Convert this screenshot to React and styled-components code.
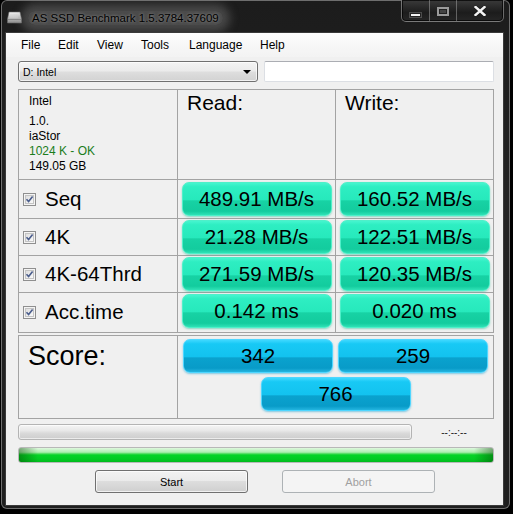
import React from "react";
import styled, { createGlobalStyle, css } from "styled-components";

const GlobalStyle = createGlobalStyle`
  html, body {
    margin: 0;
    padding: 0;
    background: #000;
  }
  body {
    width: 513px;
    height: 514px;
    overflow: hidden;
    font-family: "Liberation Sans", Arial, sans-serif;
  }
  * {
    box-sizing: border-box;
  }
`;

const menuItems = ["File", "Edit", "View", "Tools", "Language", "Help"];

const results = [
  { name: "Seq", read: "489.91 MB/s", write: "160.52 MB/s", first: true },
  { name: "4K", read: "21.28 MB/s", write: "122.51 MB/s" },
  { name: "4K-64Thrd", read: "271.59 MB/s", write: "120.35 MB/s" },
  { name: "Acc.time", read: "0.142 ms", write: "0.020 ms" }
];

const DriveIcon = () => (
  <svg width="15" height="13" viewBox="0 0 15 13">
    <defs>
      <linearGradient id="drv" x1="0" y1="0" x2="0" y2="1">
        <stop offset="0" stopColor="#f4f4f4" />
        <stop offset="0.6" stopColor="#b9b9b9" />
        <stop offset="1" stopColor="#8a8a8a" />
      </linearGradient>
    </defs>
    <path d="M2 1 H13 L14.5 8 V12 H0.5 V8 Z" fill="url(#drv)" stroke="#6a6a6a" strokeWidth="0.6" />
    <path d="M1 8.5 H14" stroke="#777" strokeWidth="0.7" />
    <path d="M4 3 V7 M6 3 V7 M8 3 V7 M10 3 V7" stroke="#d8d8d8" strokeWidth="0.7" />
  </svg>
);

const CloseIcon = () => (
  <svg width="12" height="10" viewBox="0 0 12 10">
    <path d="M1.5 1 L10.5 9 M10.5 1 L1.5 9" stroke="#1a1a1a" strokeWidth="4" strokeLinecap="square" />
    <path d="M1.5 1 L10.5 9 M10.5 1 L1.5 9" stroke="#f4f4f4" strokeWidth="2.4" strokeLinecap="square" />
  </svg>
);

const CheckBox = () => (
  <svg width="13" height="13" viewBox="0 0 13 13">
    <defs>
      <linearGradient id="cbx" x1="0" y1="0" x2="1" y2="1">
        <stop offset="0" stopColor="#dcdcdc" />
        <stop offset="1" stopColor="#fbfbfb" />
      </linearGradient>
    </defs>
    <rect x="0.5" y="0.5" width="12" height="12" fill="#f4f4f4" stroke="#8f8f8f" />
    <rect x="2.5" y="2.5" width="8" height="8" fill="url(#cbx)" stroke="#c4c4c4" />
    <path d="M3.5 6.3 L5.6 8.6 L9.6 3.6" fill="none" stroke="#4a5d8c" strokeWidth="1.6" />
  </svg>
);

const App = () => {
  return (
    <>
      <GlobalStyle />
      <Desktop>
        <Window>
          <TitleBar>
            <TitleIcon>
              <DriveIcon />
            </TitleIcon>
            <TitleText>AS SSD Benchmark 1.5.3784.37609</TitleText>
            <Controls>
              <CtrlButton $w={28}>
                <MinGlyph />
              </CtrlButton>
              <CtrlButton $w={27}>
                <MaxGlyph />
              </CtrlButton>
              <CtrlButton $w={46} $last>
                <CloseIcon />
              </CtrlButton>
            </Controls>
          </TitleBar>

          <Client>
            <MenuBar>
              {menuItems.map((m) => (
                <MenuItem key={m}>{m}</MenuItem>
              ))}
            </MenuBar>

            <Content>
              <DriveRow>
                <Combo>
                  <span>D: Intel</span>
                  <ComboArrow />
                </Combo>
                <TextBox />
              </DriveRow>

              <ResultsGrid>
                <Cell $pad="4px 10px">
                  <InfoLine $gap>Intel</InfoLine>
                  <InfoLine>1.0.</InfoLine>
                  <InfoLine>iaStor</InfoLine>
                  <InfoLine $ok>1024 K - OK</InfoLine>
                  <InfoLine>149.05 GB</InfoLine>
                </Cell>
                <Cell $pad="2px 9px">
                  <Heading>Read:</Heading>
                </Cell>
                <Cell $pad="2px 9px">
                  <Heading>Write:</Heading>
                </Cell>
                {results.map((r) => (
                  <React.Fragment key={r.name}>
                    <LabelCell>
                      <CheckBox />
                      <Label>{r.name}</Label>
                    </LabelCell>
                    <PillCell $top={r.first ? 2 : 1}>
                      <Pill $tone="green">{r.read}</Pill>
                    </PillCell>
                    <PillCell $top={r.first ? 2 : 1}>
                      <Pill $tone="green">{r.write}</Pill>
                    </PillCell>
                  </React.Fragment>
                ))}
              </ResultsGrid>

              <ScoreGrid>
                <Cell $pad="7px 9px">
                  <ScoreTitle>Score:</ScoreTitle>
                </Cell>
                <ScoreCell>
                  <Pill $tone="blue">342</Pill>
                  <Pill $tone="blue">259</Pill>
                  <Pill $tone="blue">766</Pill>
                </ScoreCell>
              </ScoreGrid>

              <ProgressRow>
                <GreyBar />
                <Timer>--:--:--</Timer>
              </ProgressRow>

              <GreenBar />

              <ButtonRow>
                <Button>Start</Button>
                <Button disabled>Abort</Button>
              </ButtonRow>
            </Content>
          </Client>
        </Window>
      </Desktop>
    </>
  );
};

const Desktop = styled.div`
  width: 513px;
  height: 514px;
  padding: 0 3px 5px 1px;
  background: #000;
  display: flex;
`;

const Window = styled.div`
  flex: 1;
  display: flex;
  flex-direction: column;
  border: 1px solid rgba(190, 190, 190, 0.5);
  border-radius: 6px;
  background: linear-gradient(#1c1c1c, #232323 40%, #1e1e1e);
  padding: 0 5px 2px 3px;
`;

const TitleBar = styled.div`
  height: 31px;
  display: flex;
  align-items: flex-start;
  padding-left: 2px;
`;

const TitleIcon = styled.div`
  margin-top: 10px;
  width: 15px;
  height: 13px;
  display: flex;
`;

const TitleText = styled.div`
  margin: 10px 0 0 6px;
  font-size: 11.5px;
  color: #000;
  line-height: 14px;
  padding: 0 4px;
  background: rgba(150, 150, 150, 0.38);
  box-shadow: 0 0 10px 7px rgba(150, 150, 150, 0.36);
  border-radius: 8px;
  text-shadow: 0 0 3px rgba(255, 255, 255, 0.45);
`;

const Controls = styled.div`
  margin-left: auto;
  margin-top: -1px;
  display: flex;
  height: 22px;
  border: 1px solid rgba(200, 200, 200, 0.45);
  border-top: none;
  border-radius: 0 0 5px 5px;
  background: linear-gradient(#3a3a3a, #1c1c1c 60%, #262626);
  box-shadow: inset 0 0 0 1px rgba(0, 0, 0, 0.7);
`;

const CtrlButton = styled.div`
  width: ${(p) => p.$w}px;
  display: flex;
  align-items: center;
  justify-content: center;
  border-right: ${(p) => (p.$last ? "none" : "1px solid rgba(200,200,200,0.4)")};
`;

const MinGlyph = styled.div`
  width: 11px;
  height: 4px;
  margin-top: 8px;
  background: #f2f2f2;
  border: 1px solid #222;
  outline: 1px solid rgba(255, 255, 255, 0.2);
`;

const MaxGlyph = styled.div`
  width: 12px;
  height: 9px;
  margin-top: 2px;
  background: #444;
  border: 2px solid #9a9a9a;
  box-shadow: inset 0 0 0 1px #222;
`;

const Client = styled.div`
  flex: 1;
  display: flex;
  flex-direction: column;
  background: #f0f0f0;
  border: 1px solid #3a3a3a;
`;

const MenuBar = styled.div`
  height: 24px;
  display: grid;
  grid-template-columns: 37px 39px 44px 48px 71px auto;
  align-items: center;
  padding-left: 15px;
  background: linear-gradient(#fdfdfd, #f6f6f6 60%, #f3f3f3);
`;

const MenuItem = styled.div`
  font-size: 12px;
  color: #000;
`;

const Content = styled.div`
  display: flex;
  flex-direction: column;
  padding-left: 12px;
`;

const DriveRow = styled.div`
  display: flex;
  gap: 6px;
  margin-top: 4px;
  height: 21px;
`;

const Combo = styled.div`
  width: 240px;
  display: flex;
  align-items: center;
  justify-content: space-between;
  padding: 0 6px 0 4px;
  border: 1px solid #707070;
  border-radius: 3px;
  background: linear-gradient(#f4f4f4, #ebebeb 48%, #dedede 52%, #d2d2d2);
  box-shadow: inset 0 0 0 1px rgba(255, 255, 255, 0.7);
  font-size: 10.5px;
  color: #000;
`;

const ComboArrow = styled.div`
  width: 0;
  height: 0;
  border-left: 4px solid transparent;
  border-right: 4px solid transparent;
  border-top: 4px solid #000;
`;

const TextBox = styled.div`
  width: 230px;
  background: #fff;
  border: 1px solid #dcdfe4;
  border-top-color: #abadb3;
  border-radius: 2px;
`;

const gridBase = css`
  width: 476px;
  display: grid;
  gap: 1px;
  background: #a3a3a3;
  border: 1px solid #a3a3a3;
`;

const ResultsGrid = styled.div`
  ${gridBase}
  margin-top: 7px;
  grid-template-columns: 158px 157px 157px;
  grid-template-rows: 89px 38px 36px 36px 39px;
`;

const ScoreGrid = styled.div`
  ${gridBase}
  margin-top: 2px;
  grid-template-columns: 158px 315px;
  grid-template-rows: 82px;
`;

const Cell = styled.div`
  background: #f0f0f0;
  padding: ${(p) => p.$pad || "0"};
`;

const InfoLine = styled.div`
  font-size: 12px;
  line-height: 15px;
  color: ${(p) => (p.$ok ? "#1b7d1b" : "#000")};
  margin-bottom: ${(p) => (p.$gap ? "5px" : "0")};
`;

const Heading = styled.div`
  font-size: 21px;
  line-height: 1;
  color: #000;
`;

const LabelCell = styled.div`
  background: #f0f0f0;
  display: flex;
  align-items: center;
  gap: 9px;
  padding-left: 4px;
  svg {
    flex-shrink: 0;
  }
`;

const Label = styled.div`
  font-size: 20.5px;
  line-height: 1;
  color: #000;
`;

const PillCell = styled.div`
  background: #f0f0f0;
  display: flex;
  justify-content: center;
  align-items: flex-start;
  padding-top: ${(p) => p.$top}px;
`;

const tones = {
  green: css`
    background: linear-gradient(
      #46f5cf 0%,
      #2eeec2 12%,
      #27e9bc 52%,
      #17d2a4 56%,
      #13cc9e 88%,
      #2fe2b6 100%
    );
    border: 1px solid #4ef0c9;
    box-shadow: 0 1px 2px rgba(30, 190, 150, 0.5);
  `,
  blue: css`
    background: linear-gradient(
      #3fd8ff 0%,
      #18c9f5 12%,
      #13c2ef 52%,
      #0aa2ce 56%,
      #089bc8 88%,
      #24b5e0 100%
    );
    border: 1px solid #4fd6ff;
    box-shadow: 0 1px 2px rgba(20, 160, 210, 0.5);
  `
};

const Pill = styled.div`
  width: 150px;
  height: 34px;
  border-radius: 7px;
  display: flex;
  align-items: center;
  justify-content: center;
  font-size: 20.5px;
  color: #000;
  ${(p) => tones[p.$tone]}
`;

const ScoreTitle = styled.div`
  font-size: 27px;
  line-height: 1;
  color: #000;
`;

const ScoreCell = styled.div`
  background: #f0f0f0;
  display: flex;
  flex-wrap: wrap;
  justify-content: center;
  align-content: flex-start;
  gap: 4px 5px;
  padding-top: 3px;
`;

const ProgressRow = styled.div`
  display: flex;
  align-items: center;
  margin-top: 5px;
  width: 476px;
`;

const GreyBar = styled.div`
  width: 394px;
  height: 16px;
  border: 1px solid #b4b4b4;
  border-radius: 3px;
  background: linear-gradient(#f5f5f5, #e8e8e8 40%, #d9d9d9 60%, #cdcdcd);
  box-shadow: inset 0 0 0 1px rgba(255, 255, 255, 0.6);
`;

const Timer = styled.div`
  flex: 1;
  text-align: center;
  font-size: 10px;
  color: #222;
  padding-left: 2px;
`;

const GreenBar = styled.div`
  margin-top: 7px;
  width: 476px;
  height: 16px;
  border: 1px solid #b8b8b8;
  border-radius: 3px;
  background:
    linear-gradient(90deg, rgba(0, 70, 0, 0.45), transparent 4%, transparent 96%, rgba(0, 70, 0, 0.45)),
    linear-gradient(#dff8df 0%, #aeeeb0 30%, #44db55 42%, #05d326 50%, #02cb22 80%, #00b91c 100%);
`;

const ButtonRow = styled.div`
  display: flex;
  gap: 34px;
  margin-top: 7px;
  padding-left: 77px;
`;

const Button = styled.button`
  width: 153px;
  height: 23px;
  padding: 0;
  font-family: "Liberation Sans", Arial, sans-serif;
  font-size: 11px;
  color: #000;
  border: 1px solid #707070;
  border-radius: 3px;
  background: linear-gradient(#f2f2f2, #ebebeb 45%, #dddddd 50%, #cfcfcf);
  box-shadow: inset 0 0 0 1px rgba(255, 255, 255, 0.7);

  &:disabled {
    color: #a0a0a0;
    border-color: #adb2b5;
    background: #f4f4f4;
    box-shadow: none;
  }
`;

export default App;
